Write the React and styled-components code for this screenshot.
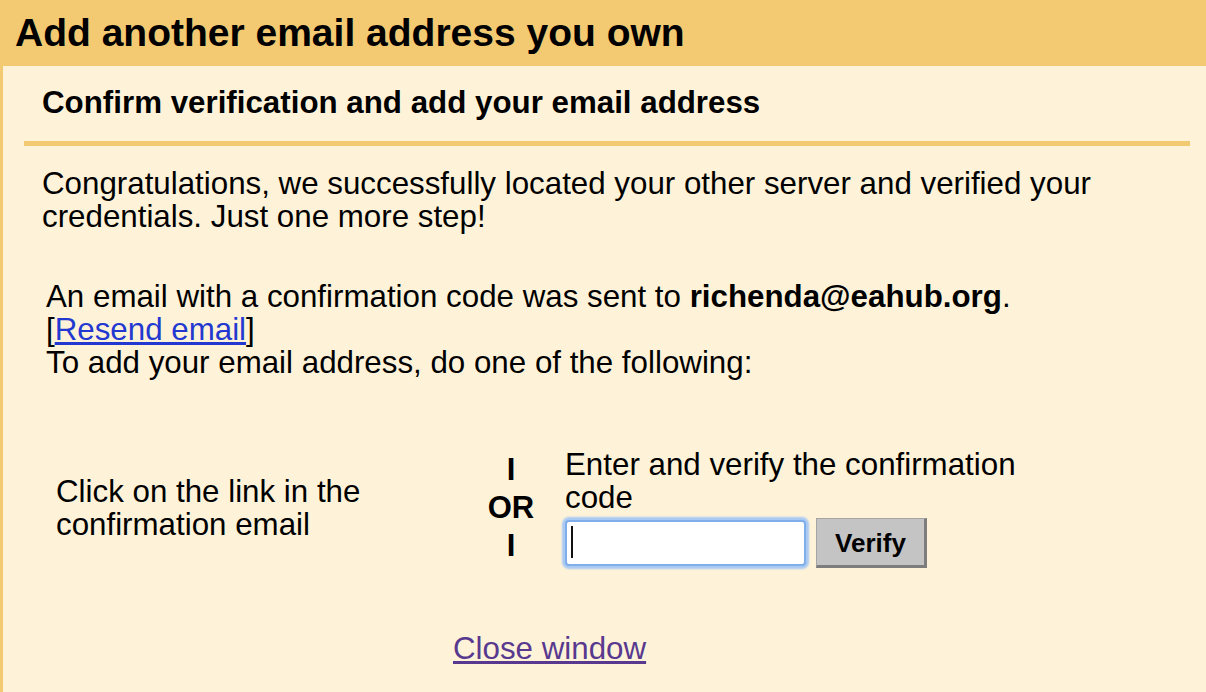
import React from 'react';
import styled, { createGlobalStyle } from 'styled-components';

const GlobalStyle = createGlobalStyle`
  html, body {
    margin: 0;
    padding: 0;
    background: #fef3d9;
  }
  body {
    font-family: "Liberation Sans", Arial, sans-serif;
    color: #000;
  }
`;

const Page = styled.div`
  width: 1206px;
  height: 692px;
  overflow: hidden;
  background: #fef3d9;
`;

const Header = styled.h1`
  margin: 0;
  height: 66px;
  box-sizing: border-box;
  padding: 11px 0 0 15px;
  background: #f3c971;
  font-size: 39px;
  font-weight: bold;
  line-height: 44px;
  white-space: nowrap;
`;

const Body = styled.div`
  border-left: 3px solid #f3c971;
  height: 626px;
  box-sizing: border-box;
  padding: 0 16px 0 21px;
`;

const SubHeader = styled.h2`
  margin: 0;
  padding: 19px 0 20px 18px;
  border-bottom: 5px solid #f3c971;
  font-size: 31.3px;
  line-height: 36px;
  font-weight: bold;
  white-space: nowrap;
`;

const Intro = styled.p`
  margin: 0;
  padding: 21px 0 0 18px;
  font-size: 31.3px;
  line-height: 33px;
  white-space: nowrap;
`;

const Notice = styled.div`
  padding: 47px 0 0 22px;
  font-size: 31.3px;
  line-height: 33px;
  white-space: nowrap;
`;

const Link = styled.a`
  color: ${p => (p.$visited ? '#58398f' : '#2238d0')};
  text-decoration: underline;
  cursor: pointer;
`;

const Choices = styled.div`
  display: flex;
  align-items: center;
  margin-top: 69px;
  padding-left: 32px;
`;

const Choice = styled.div`
  width: ${p => p.$width}px;
  font-size: 31.3px;
  line-height: 33px;
  white-space: nowrap;
`;

const OrColumn = styled.div`
  width: 80px;
  display: flex;
  flex-direction: column;
  align-items: center;
  font-weight: bold;
  font-size: 31px;
  line-height: 38px;
  margin-right: 14px;
`;

const CodeRow = styled.div`
  display: flex;
  align-items: center;
  gap: 10px;
  margin-top: 4px;
`;

const InputWrap = styled.div`
  position: relative;
  width: 241px;
  height: 46px;
  box-sizing: border-box;
  border: 2px solid #7faee9;
  border-radius: 4px;
  box-shadow: 0 0 2px 3px #a8c9f3;
  background: #fff;
`;

const CodeInput = styled.input`
  width: 100%;
  height: 100%;
  box-sizing: border-box;
  border: 0;
  outline: none;
  background: transparent;
  padding: 0 8px;
  font-size: 26px;
  font-family: inherit;
`;

const Caret = styled.span`
  position: absolute;
  left: 4px;
  top: 4px;
  width: 2px;
  height: 32px;
  background: #111;
`;

const VerifyButton = styled.button`
  width: 111px;
  height: 50px;
  box-sizing: border-box;
  background: #c4c4c4;
  border: 1px solid #a5a5a5;
  border-right: 3px solid #7d7d7d;
  border-bottom: 3px solid #7d7d7d;
  font-family: inherit;
  font-size: 26px;
  font-weight: bold;
  color: #000;
  padding: 2px 0 0;
`;

const Footer = styled.div`
  padding: 64px 0 0 429px;
  font-size: 31.3px;
  line-height: 33px;
  white-space: nowrap;
`;

export default function App() {
  return (
    <Page>
      <GlobalStyle />
      <Header>Add another email address you own</Header>
      <Body>
        <SubHeader>Confirm verification and add your email address</SubHeader>
        <Intro>
          Congratulations, we successfully located your other server and verified your
          <br />
          credentials. Just one more step!
        </Intro>
        <Notice>
          An email with a confirmation code was sent to <b>richenda@eahub.org</b>.
          <br />
          [<Link>Resend email</Link>]
          <br />
          To add your email address, do one of the following:
        </Notice>
        <Choices>
          <Choice $width={415}>
            Click on the link in the
            <br />
            confirmation email
          </Choice>
          <OrColumn>
            <span>I</span>
            <span>OR</span>
            <span>I</span>
          </OrColumn>
          <Choice $width={480}>
            Enter and verify the confirmation
            <br />
            code
            <CodeRow>
              <InputWrap>
                <CodeInput type="text" />
                <Caret />
              </InputWrap>
              <VerifyButton>Verify</VerifyButton>
            </CodeRow>
          </Choice>
        </Choices>
        <Footer>
          <Link $visited>Close window</Link>
        </Footer>
      </Body>
    </Page>
  );
}
